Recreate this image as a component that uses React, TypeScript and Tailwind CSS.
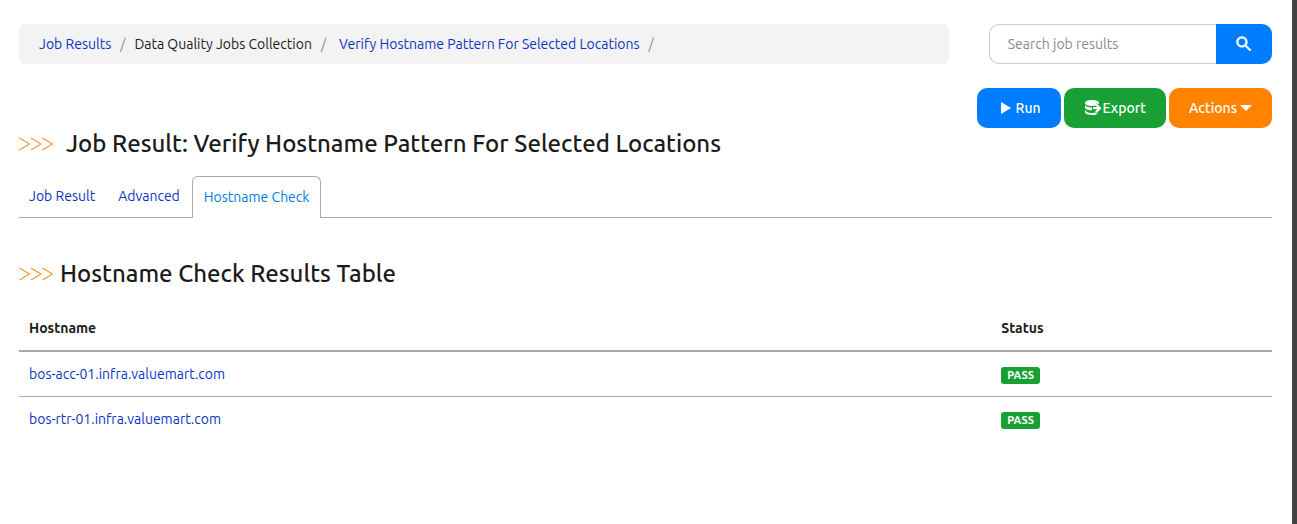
import type { ReactNode } from "react";

const hosts = [
  { name: "bos-acc-01.infra.valuemart.com", status: "PASS" },
  { name: "bos-rtr-01.infra.valuemart.com", status: "PASS" },
];

function Chevrons() {
  return (
    <svg aria-hidden="true" width="35" height="14" viewBox="0 0 35 14" fill="none" stroke="#f59331" strokeWidth="1.1" className="shrink-0">
      <path d="M.5 1 10.500 7 .5 13" />
      <path d="M12 1 22 7l-10 6" />
      <path d="M23.500 1l10 6-10 6" />
    </svg>
  );
}

function SearchIcon() {
  return (
    <svg aria-hidden="true" width="20" height="20" viewBox="0 0 24 24" fill="currentColor" stroke="currentColor" strokeWidth=".7">
      <path d="M9.500 3A6.500 6.500 0 0 1 16 9.500c0 1.610-.590 3.090-1.560 4.230l.270.270h.790l5 5-1.500 1.500-5-5v-.790l-.270-.270A6.516 6.516 0 0 1 9.500 16a6.500 6.500 0 0 1 0-13m0 2C7 5 5 7 5 9.500S7 14 9.500 14 14 12 14 9.500 12 5 9.500 5z" />
    </svg>
  );
}

function PlayIcon() {
  return (
    <svg aria-hidden="true" width="12" height="14" viewBox="0 0 12 14" fill="currentColor">
      <path d="M1 1v12l10-6z" />
    </svg>
  );
}

function ExportIcon() {
  return (
    <svg aria-hidden="true" width="18" height="18" viewBox="0 0 18 18" fill="currentColor">
      <path d="M8 1C4.100 1 1 2.300 1 4s3.100 3 7 3c1.500 0 2.900-.2 4-.5V4.300l2.200 1c.5-.4.8-.8.8-1.300C15 2.300 11.900 1 8 1z" />
      <path d="M1 6v2.400c0 1.600 3 2.900 7 2.900V8.600C4.400 8.500 1.500 7.500 1 6z" />
      <path d="M1 10.400v2.700C1 14.800 4.100 16 8 16c3.200 0 5.900-.8 6.700-2.100l-2.700 1v-1.400c-1.200.3-2.500.4-4 .4-3.600 0-6.500-1.600-7-3.500z" />
      <path d="M12.600 4.400l5 4.800-5 4.800-1.500-1.500 2.200-2.200H9V8.100h4.300l-2.200-2.200z" />
    </svg>
  );
}

function CaretIcon() {
  return (
    <svg aria-hidden="true" width="12" height="6" viewBox="0 0 12 6" fill="currentColor">
      <path d="M0 0h12L6 6z" />
    </svg>
  );
}

function Slash() {
  return <span aria-hidden="true" className="px-[9px] text-[#8c8c8c]">/</span>;
}

function ActionButton({ color, children }: { color: string; children: ReactNode }) {
  return (
    <button type="button" className={`flex h-10 items-center rounded-[10px] px-5 font-medium text-white ${color}`}>
      {children}
    </button>
  );
}

export default function App() {
  return (
    <div className="min-h-screen border-r-[5px] border-[#424242] bg-white pt-6 pr-5 pb-10 pl-[19px] font-['Ubuntu','Noto_Sans',sans-serif] text-sm leading-5 text-[#1b1b1b]">
      <div className="grid grid-cols-4 gap-10">
        <nav aria-label="Breadcrumb" className="col-span-3 flex h-10 items-center rounded-md bg-[#f3f3f3] px-5">
          <a href="#results" className="text-[#0b33c2]">Job Results</a>
          <Slash />
          <span>Data Quality Jobs Collection</span>
          <Slash />
          <a href="#job" className="ml-1 text-[#0b33c2]">Verify Hostname Pattern For Selected Locations</a>
          <Slash />
        </nav>
        <form role="search" className="flex h-10" onSubmit={(e) => e.preventDefault()}>
          <input
            type="search"
            aria-label="Search job results"
            placeholder="Search job results"
            className="min-w-0 flex-1 rounded-l-[10px] border border-r-0 border-[#ccc] px-[18px] outline-none placeholder:text-[#8a8a8a]"
          />
          <button type="submit" aria-label="Search" className="flex w-14 items-center justify-center rounded-r-[10px] bg-[#007dff] text-white">
            <SearchIcon />
          </button>
        </form>
      </div>

      <div className="mt-6 flex h-10 justify-end gap-[3px]">
        <ActionButton color="bg-[#007dff]">
          <span className="flex items-center gap-1 pl-[3px]"><PlayIcon />Run</span>
        </ActionButton>
        <ActionButton color="bg-[#18a034]">
          <span className="flex items-center gap-px"><ExportIcon />Export</span>
        </ActionButton>
        <ActionButton color="bg-[#ff8200]">
          <span className="flex items-center gap-[3px]">Actions<CaretIcon /></span>
        </ActionButton>
      </div>

      <h1 className="flex items-center gap-3 text-2xl leading-8 font-medium">
        <Chevrons />
        Job Result: Verify Hostname Pattern For Selected Locations
      </h1>

      <nav aria-label="Job result sections" className="mt-4 flex h-[42px] items-end border-b border-[#a9a9a9]">
        <a href="#result" className="px-[10px] pb-[11px] text-[#0b33c2]">Job Result</a>
        <a href="#advanced" className="ml-[3px] px-[10px] pb-[11px] text-[#0b33c2]">Advanced</a>
        <a href="#check" aria-current="page" className="-mb-px ml-[2px] rounded-t-md border border-b-0 border-[#a9a9a9] bg-white px-[11px] pt-[10px] pb-[11px] text-[#007de3]">Hostname Check</a>
      </nav>

      <h2 className="mt-10 flex items-center gap-[6px] text-2xl leading-8 font-medium">
        <Chevrons />
        Hostname Check Results Table
      </h2>

      <table className="mt-4 w-full table-fixed border-collapse text-left">
        <thead>
          <tr className="h-[45px] border-b-2 border-[#a9a9a9]">
            <th scope="col" className="w-[77.6%] px-[10px] font-bold">Hostname</th>
            <th scope="col" className="px-[10px] font-bold">Status</th>
          </tr>
        </thead>
        <tbody>
          {hosts.map((host) => (
            <tr key={host.name} className="h-[45px] border-b border-[#a9a9a9] last:border-b-0">
              <td className="px-[10px]"><a href="#host" className="text-[#0b33c2]">{host.name}</a></td>
              <td className="px-[10px] pt-1">
                <span className="block h-[17px] w-fit rounded-[3px] bg-[#18a034] px-[6px] text-[11px] leading-[17px] font-bold text-white">{host.status}</span>
              </td>
            </tr>
          ))}
        </tbody>
      </table>
    </div>
  );
}
